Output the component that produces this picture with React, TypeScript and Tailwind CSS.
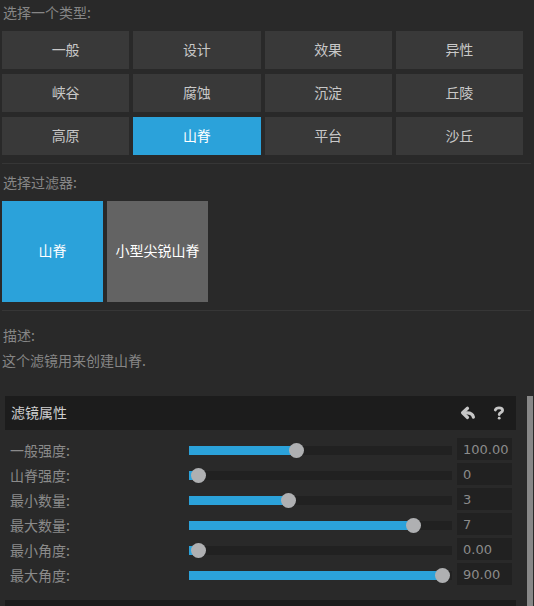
import { useState } from "react";

const types = ["一般", "设计", "效果", "异性", "峡谷", "腐蚀", "沉淀", "丘陵", "高原", "山脊", "平台", "沙丘"];
const filters = ["山脊", "小型尖锐山脊"];

const properties = [
  { id: "strength", label: "一般强度:", value: "100.00", position: 40 },
  { id: "ridge", label: "山脊强度:", value: "0", position: 0 },
  { id: "min-count", label: "最小数量:", value: "3", position: 37 },
  { id: "max-count", label: "最大数量:", value: "7", position: 88 },
  { id: "min-angle", label: "最小角度:", value: "0.00", position: 0 },
  { id: "max-angle", label: "最大角度:", value: "90.00", position: 100 },
];

type Property = (typeof properties)[number];

function Heading({ children }: { children: string }) {
  return <h2 className="pb-0.5 pl-[3px] text-sm leading-[18px] text-[#868686]">{children}</h2>;
}

function PropertyRow({ property }: { property: Property }) {
  const [position, setPosition] = useState(property.position);
  const [value, setValue] = useState(property.value);
  const fill = `calc(9px + (100% - 18px) * ${position / 100})`;

  return (
    <div className="flex h-[25px] items-center">
      <label htmlFor={property.id} className="w-[179px] shrink-0 pb-0.5 text-sm leading-5 text-[#8b8b8b]">
        {property.label}
      </label>
      <input
        id={property.id}
        type="range"
        min={0}
        max={100}
        value={position}
        onChange={(e) => setPosition(Number(e.target.value))}
        style={{ backgroundImage: `linear-gradient(to right, #2ba2da ${fill}, #212121 ${fill})` }}
        className="h-[19px] min-w-0 flex-1 appearance-none bg-[length:100%_9px] bg-center bg-no-repeat [&::-webkit-slider-thumb]:size-[19px] [&::-webkit-slider-thumb]:appearance-none [&::-webkit-slider-thumb]:rounded-full [&::-webkit-slider-thumb]:border-2 [&::-webkit-slider-thumb]:border-transparent [&::-webkit-slider-thumb]:bg-[#afb0b2] [&::-webkit-slider-thumb]:bg-clip-padding"
      />
      <input
        type="text"
        aria-label={property.label}
        value={value}
        onChange={(e) => setValue(e.target.value)}
        className="mb-[3px] ml-[5px] h-[22px] w-[55px] shrink-0 bg-[#212121] pl-1.5 font-['DejaVu_Sans',sans-serif] text-[13px] text-[#8b8b8b]"
      />
    </div>
  );
}

export default function App() {
  const [type, setType] = useState("山脊");
  const [filter, setFilter] = useState("山脊");

  return (
    <main className="flex h-screen flex-col overflow-hidden bg-[#292929] pt-[3px] font-['Noto_Sans_CJK_SC',sans-serif] text-sm">
      <section>
        <Heading>选择一个类型:</Heading>
        <div className="mt-2 mr-[11px] ml-0.5 grid grid-cols-4 gap-x-1 gap-y-[5px]">
          {types.map((name) => (
            <button
              key={name}
              type="button"
              onClick={() => setType(name)}
              className={`h-[38px] pb-0.5 ${name === type ? "bg-[#2ba2da] text-white" : "bg-[#393939] text-[#c8c8c8]"}`}
            >
              {name}
            </button>
          ))}
        </div>
      </section>
      <hr className="mt-2 mr-[3px] ml-0.5 border-[#363636]" />

      <section className="mt-[9px]">
        <Heading>选择过滤器:</Heading>
        <div className="mt-2 ml-0.5 flex gap-1">
          {filters.map((name) => (
            <button
              key={name}
              type="button"
              onClick={() => setFilter(name)}
              className={`size-[101px] pb-1 text-white ${name === filter ? "bg-[#2ba2da]" : "bg-[#636363]"}`}
            >
              {name}
            </button>
          ))}
        </div>
      </section>
      <hr className="mt-2 mr-[3px] ml-0.5 border-[#363636]" />

      <section className="mt-[15px]">
        <Heading>描述:</Heading>
        <p className="mt-[5px] pb-0.5 pl-0.5 leading-[18px] text-[#868686]">这个滤镜用来创建山脊.</p>
      </section>

      <div className="mt-[25px] flex min-h-0 flex-1">
        <div className="min-w-0 flex-1 overflow-hidden pl-[5px]">
          <header className="flex h-[34px] items-center bg-[#1c1c1c] pl-1.5 text-[#d0d0d0]">
            <h2 className="flex-1 pb-0.5">滤镜属性</h2>
            <button type="button" aria-label="重置" className="mr-[15px]">
              <svg viewBox="0 0 16 16" className="size-4" fill="none" stroke="#c6c6c6" strokeWidth="3.2" strokeLinecap="round" strokeLinejoin="round">
                <path d="M7.5 3.300 2.600 7.800l4.900 4.700" />
                <path d="M3.500 7.800h3.700c3.200 0 5.600 1.600 6.200 4.300" />
              </svg>
            </button>
            <button type="button" aria-label="帮助" className="mr-[9px]">
              <svg viewBox="0 0 16 16" className="size-4" fill="none" stroke="#c6c6c6" strokeWidth="2.8" strokeLinecap="round" strokeLinejoin="round">
                <path d="M4.3 5C5 3.1 6.3 2.8 8 2.8c2.2 0 3.6 1 3.6 2.6C11.6 7.500 8.200 7.400 8.200 9.500" />
                <path d="M8.200 13.200h.01" />
              </svg>
            </button>
          </header>
          <div className="pt-2 pr-1 pl-[5px]">
            {properties.map((property) => (
              <PropertyRow key={property.id} property={property} />
            ))}
          </div>
          <div className="mt-3 h-[34px] bg-[#1c1c1c]" />
        </div>
        <div className="mr-px ml-[11px] w-1.5 bg-[#888888]" />
      </div>
    </main>
  );
}
